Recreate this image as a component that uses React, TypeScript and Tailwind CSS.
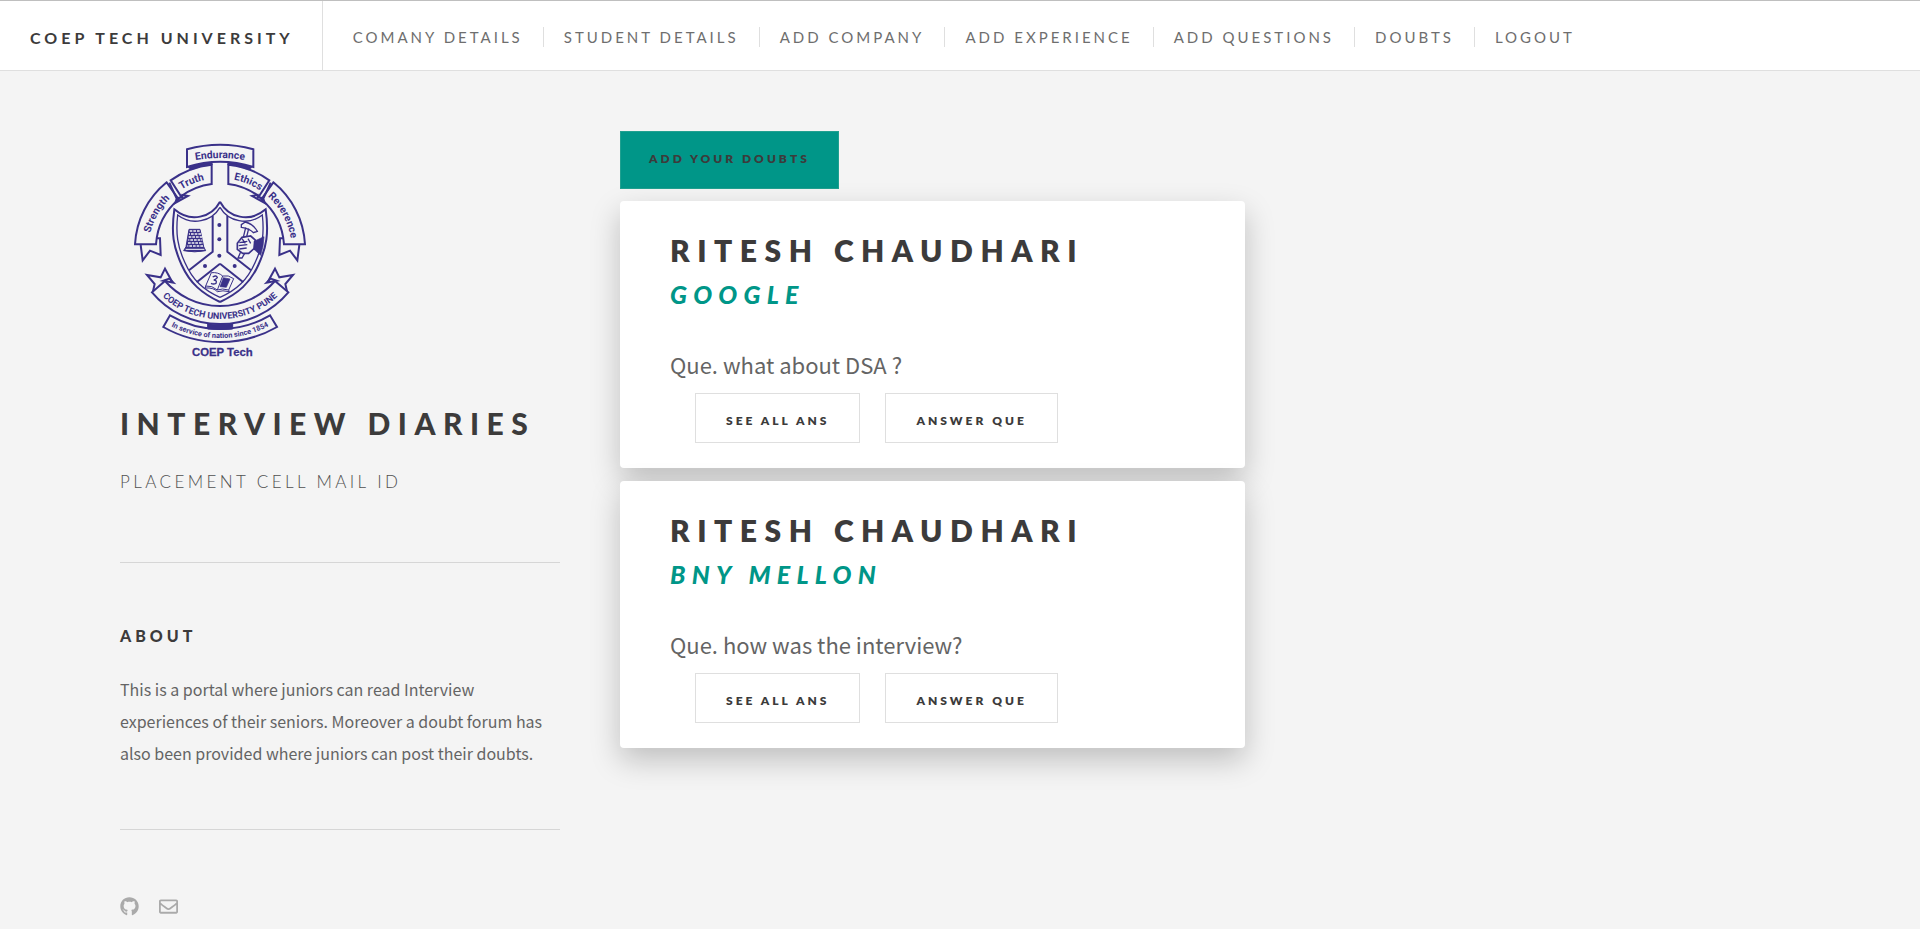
import { FaGithub, FaRegEnvelope } from "react-icons/fa";

const links = [
  "Comany Details",
  "Student Details",
  "Add Company",
  "Add Experience",
  "Add Questions",
  "Doubts",
  "Logout",
];

const doubts = [
  { name: "Ritesh Chaudhari", company: "Google", question: "what about DSA ?" },
  { name: "Ritesh Chaudhari", company: "BNY Mellon", question: "how was the interview?" },
];

function CrestHalf() {
  return (
    <g>
      {/* upper scrolls */}
      <path d="M45 343A257 257 0 0 1 140 157L176 208A195 195 0 0 0 108 343Z" />
      <path d="M275 104A257 257 0 0 0 152 151L183 199A195 195 0 0 1 275 162Z" />
      <path d="M148 158L170 206L166 219L204 198L184 194" />
      <path d="M170 206L190 200" strokeWidth="7" />
      <path d="M62 345L68 391L90 362L122 375L120 325L109 325" />
      <path d="M204 112Q240 97 277 95V105Q245 107 212 120Z" fill="#3a3189" strokeWidth="1" />
      {/* shield */}
      <path d="M300 215C275 262 212 280 163 238C153 310 160 350 185 405C210 460 245 490 300 516" />
      <path d="M300 232C275 275 215 288 173 255C167 310 172 350 195 398C218 450 250 480 300 502" strokeWidth="4" />
      <path d="M278 258V365L207 421M300 401L230 457" />
      {/* lower scroll tails */}
      <path d="M158 458L135 416L122 442L81 435L104 462L99 484" />
      <path d="M130 452L160 458L148 446Z" />
    </g>
  );
}

function Crest() {
  return (
    <svg
      viewBox="0 0 600 720"
      className="block h-[240px] w-[200px]"
      role="img"
      aria-label="COEP Tech"
      fill="none"
      stroke="#3a3189"
      strokeWidth="6"
      strokeLinejoin="miter"
    >
      <defs>
        <path id="arc-ring" d="M85 360A215 215 0 0 1 515 360" />
        <path id="arc-top" d="M210 93Q300 75 390 93" />
        <path id="arc-name" d="M111 483A254 254 0 0 0 489 483" />
        <path id="arc-motto" d="M128 574A320 320 0 0 0 472 574" />
      </defs>
      <CrestHalf />
      <g transform="translate(600 0) scale(-1 1)">
        <CrestHalf />
      </g>
      <path d="M201 58Q300 31 400 58V111Q300 80 201 111Z" fill="#f4f4f4" />
      <path d="M135 453A219 219 0 0 0 465 453L505 487A267 267 0 0 1 96 487Z" fill="#f4f4f4" />
      <path d="M150 556A295 295 0 0 0 450 556L471 591A344 344 0 0 1 130 591Z" fill="#f4f4f4" />
      <path d="M263 581Q300 585 338 581V597Q300 600 263 597Z" fill="#3a3189" strokeWidth="3" />
      <g fill="#3a3189" stroke="none">
        <circle cx="298" cy="285" r="6" />
        <circle cx="298" cy="328" r="6" />
        <circle cx="298" cy="377" r="6" />
        <circle cx="255" cy="408" r="6" />
        <circle cx="344" cy="408" r="6" />
      </g>
      {/* thimble */}
      <path d="M207 298H240L251 350L257 362Q224 369 191 362L198 350Z" fill="#3a3189" strokeWidth="3" />
      <g stroke="#f4f4f4" strokeWidth="5">
        <path d="M209 303H240M206 321H246M204 339H249" strokeDasharray="8 3" />
        <path d="M207 312H244M205 330H247M202 348H250" strokeDasharray="8 3" strokeDashoffset="5" />
      </g>
      <path d="M197 358H253" stroke="#f4f4f4" strokeWidth="3" />
      {/* hammer and fist */}
      <path d="M364 284L376 276Q400 282 412 304L400 308Q390 296 364 292Z" strokeWidth="4" />
      <path d="M377 293L370 322M386 296L380 320" strokeWidth="4" />
      <path d="M352 340L366 322L392 318L406 330L402 356L386 370L368 370L352 358Z" strokeWidth="5" />
      <path d="M358 338L382 334M356 347L382 344M358 357L380 354M366 326L376 340M384 326L392 340" strokeWidth="4" />
      <path d="M402 334L432 320Q431 350 422 376L402 358Z" fill="#3a3189" strokeWidth="2" />
      <path d="M362 366L354 384L366 384L374 370" strokeWidth="4" />
      {/* open book */}
      <path d="M274 428Q295 426 308 438Q325 434 341 446L326 480Q306 474 292 480Q276 466 257 468Z" strokeWidth="3" />
      <path d="M308 438L292 480M257 468L256 474Q280 472 292 485Q308 480 328 485L326 480" strokeWidth="3" />
      <path d="M310 443L330 447L319 472L300 470Z" fill="#3a3189" strokeWidth="2" />
      <path d="M278 441Q290 434 292 443Q286 450 281 450Q292 450 288 460Q280 464 273 460" strokeWidth="4" />
      <g
        fill="#3a3189"
        stroke="none"
        textAnchor="middle"
        className="font-['Roboto',sans-serif] font-bold"
      >
        <text fontSize="31"><textPath href="#arc-top" startOffset="50%">Endurance</textPath></text>
        <text fontSize="31"><textPath href="#arc-ring" startOffset="16.5%">Strength</textPath></text>
        <text fontSize="31"><textPath href="#arc-ring" startOffset="37.5%">Truth</textPath></text>
        <text fontSize="31"><textPath href="#arc-ring" startOffset="62.5%">Ethics</textPath></text>
        <text fontSize="31"><textPath href="#arc-ring" startOffset="84%">Reverence</textPath></text>
        <text fontSize="27"><textPath href="#arc-name" startOffset="50%">COEP TECH UNIVERSITY PUNE</textPath></text>
        <text fontSize="22"><textPath href="#arc-motto" startOffset="50%">In service of nation since 1854</textPath></text>
      </g>
      <text
        x="307"
        y="677"
        fontSize="34"
        textAnchor="middle"
        fill="#3a3189"
        strokeWidth="0.8"
        className="font-['Liberation_Sans',sans-serif] font-bold"
      >
        COEP Tech
      </text>
    </svg>
  );
}

function OutlineButton({ children }: { children: string }) {
  return (
    <button
      type="button"
      className="h-[50px] border border-[#dfdfdf] px-[30px] pt-1.5 text-[12px] font-extrabold uppercase tracking-[0.25em] text-[#3c3b3b]"
    >
      {children}
    </button>
  );
}

export default function App() {
  return (
    <div className="min-h-screen bg-[#f4f4f4] font-['Lato',sans-serif] text-[#3c3b3b]">
      <header className="flex h-[71px] items-stretch border-y border-t-[#bfbfbf] border-b-[#dfdfdf] bg-white">
        <h1 className="flex items-center border-r border-[#dfdfdf] pr-7 pl-[30px] pt-1 text-[16px] font-bold uppercase tracking-[0.25em]">
          <a href="#home">COEP Tech University</a>
        </h1>
        <nav className="flex items-center pt-0.5 pl-[10px]">
          <ul className="flex">
            {links.map((label) => (
              <li key={label} className="border-l border-[#dfdfdf] px-5 leading-5 first:border-l-0">
                <a href="#page" className="text-[15px] uppercase tracking-[0.2em] text-[#6e6e6e]">
                  {label}
                </a>
              </li>
            ))}
          </ul>
        </nav>
      </header>

      <div className="flex px-[120px] pt-[59px]">
        <aside className="mr-[60px] w-[440px] shrink-0">
          <Crest />
          <h2 className="mt-[35px] text-[30px] leading-[36px] font-black uppercase tracking-[0.25em]">
            Interview Diaries
          </h2>
          <p className="mt-7 text-[17px] leading-[26px] font-light uppercase tracking-[0.2em] text-[#505050]">
            Placement cell mail id
          </p>
          <section className="mt-[67px] border-t border-[#d6d6d6] pt-[60px]">
            <h3 className="text-[16px] leading-[26px] font-black uppercase tracking-[0.25em]">About</h3>
            <p className="mt-6 font-['Noto_Sans_CJK_SC',sans-serif] text-[16px] leading-[32px] text-[#646464]">
              This is a portal where juniors can read Interview experiences of their seniors. Moreover a
              doubt forum has also been provided where juniors can post their doubts.
            </p>
          </section>
          <footer className="mt-[60px] flex items-center gap-5 border-t border-[#d6d6d6] pt-[67px] text-[19px] text-[#aaaaaa]">
            <a href="#github" aria-label="GitHub">
              <FaGithub />
            </a>
            <a href="mailto:placement" aria-label="Email">
              <FaRegEnvelope />
            </a>
          </footer>
        </aside>

        <main className="w-[625px] pt-[1px]">
          <button
            type="button"
            className="mb-3 block h-[58px] border border-[#20a090] bg-[#009688] px-7 pb-0.5 text-[12px] font-extrabold uppercase tracking-[0.25em]"
          >
            Add your doubts
          </button>
          {doubts.map((d) => (
            <article
              key={d.company}
              className="mb-[13px] rounded bg-white px-[50px] pt-[31px] pb-[25px] shadow-[0_12px_30px_rgba(0,0,0,0.22)]"
            >
              <h2 className="text-[30px] leading-[36px] font-extrabold uppercase tracking-[0.25em]">
                {d.name}
              </h2>
              <h3 className="mt-[11px] text-[25px] leading-[30px] font-black uppercase italic tracking-[0.25em] text-[#009688]">
                {d.company}
              </h3>
              <p className="mt-[37px] font-['Noto_Sans_CJK_SC',sans-serif] text-[22px] leading-[36px] text-[#646464]">
                Que. {d.question}
              </p>
              <div className="mt-[11px] flex gap-[25px] pl-[25px]">
                <OutlineButton>See all ans</OutlineButton>
                <OutlineButton>Answer que</OutlineButton>
              </div>
            </article>
          ))}
        </main>
      </div>
    </div>
  );
}
